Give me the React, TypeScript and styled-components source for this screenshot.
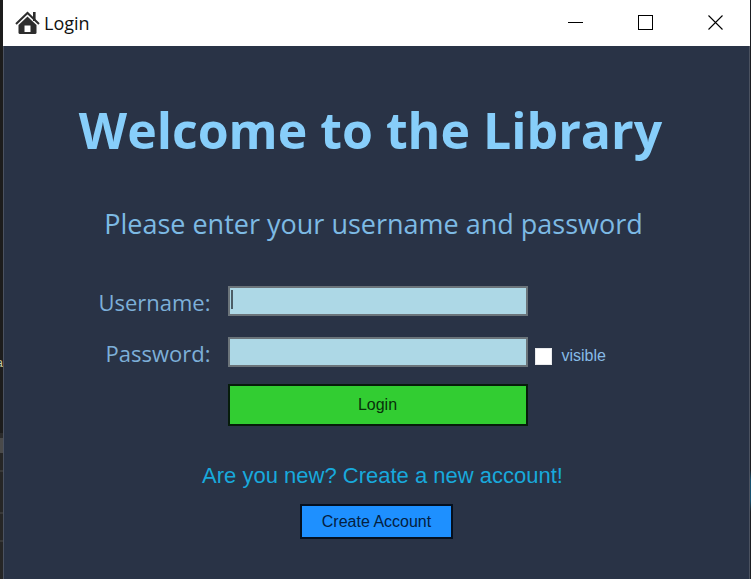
import React, { useState } from "react";
import styled, { createGlobalStyle } from "styled-components";

const UI = '"Open Sans", "Noto Sans", sans-serif';
const CLASSIC = '"Liberation Sans", Arial, sans-serif';

const GlobalStyle = createGlobalStyle`
  *, *::before, *::after { box-sizing: border-box; }
  body { margin: 0; background: #1d1f20; }
`;

const Desktop = styled.div`
  display: grid;
  grid-template-columns: 3px minmax(0, 1fr) 1px;
  min-height: 100vh;
`;

const LeftEdge = styled.div`
  overflow: hidden;
  padding-top: 355px;
  background: linear-gradient(
    #1c1c1c 433px, #2b2b2b 433px, #2b2b2b 438px, #4a4a4a 438px, #4a4a4a 453px,
    #262626 453px, #262626 470px, #383838 470px, #383838 472px,
    #262626 472px, #262626 512px, #383838 512px, #383838 514px,
    #262626 514px, #262626 540px, #383838 540px, #383838 542px, #262626 542px
  );
  color: #c9c9a0;
  font: 12px/16px ${CLASSIC};
  direction: rtl;
`;

const RightEdge = styled.div`
  background: linear-gradient(#1b1e22 470px, #17516f 480px, #17516f 500px, #1b1e22 512px);
`;

const Window = styled.main`
  display: flex;
  flex-direction: column;
  border: 1px solid #4b5260;
  border-top: 0;
  background: #293346;
`;

const TitleBar = styled.header`
  display: flex;
  align-items: center;
  height: 46px;
  margin: 0 -1px;
  padding-left: 12px;
  background: #fff;
  color: #111;
`;

const WindowTitle = styled.span`
  flex: 1;
  padding-left: 4px;
  font: 18px/24px ${UI};
`;

const CaptionButton = styled.button`
  display: grid;
  place-items: center;
  width: 70px;
  height: 46px;
  padding: 0 0 2px;
  border: 0;
  background: transparent;
  color: #000;
`;

const Content = styled.div`
  display: flex;
  flex: 1;
  flex-direction: column;
  align-items: center;
  padding: 48px 0 40px;
`;

const Heading = styled.h1`
  margin: 0;
  padding-right: 12px;
  color: #87cefa;
  font: 700 50px/72px ${UI};
  white-space: nowrap;
`;

const Prompt = styled.p`
  margin: 38px 0 0;
  padding-right: 6px;
  color: #7dbae4;
  font: 27px/40px ${UI};
  white-space: nowrap;
`;

const Form = styled.form`
  display: grid;
  grid-template-columns: 1fr 300px 1fr;
  grid-template-rows: 51px 47px auto;
  width: 100%;
  margin-top: 42px;
  padding-left: 2px;
`;

const FieldLabel = styled.label`
  grid-column: 1;
  padding-right: 17px;
  color: #7dafd8;
  font: 22px/32px ${UI};
  text-align: right;
`;

const Field = styled.div`
  position: relative;
  grid-column: 2;
`;

const TextBox = styled.input`
  display: block;
  width: 100%;
  height: 30px;
  padding: 2px 4px;
  border: 2px solid #6b747a;
  border-radius: 0;
  outline: 0;
  background: #add8e6;
  color: #111;
  font: 18px/22px ${CLASSIC};
`;

const Caret = styled.span`
  position: absolute;
  top: 4px;
  left: 3px;
  width: 2px;
  height: 19px;
  background: #4c5d66;
`;

const Visibility = styled.label`
  display: flex;
  align-items: center;
  align-self: start;
  gap: 10px;
  padding: 10px 0 0 7px;
  color: #87bbe6;
  font: 16px/18px ${CLASSIC};
`;

const CheckBox = styled.input`
  appearance: none;
  width: 17px;
  height: 17px;
  margin: 0;
  border: 1px solid #e8eaec;
  background: #fff;
  &:checked { box-shadow: inset 0 0 0 4px #fff; background: #222; }
`;

const ActionButton = styled.button<{ $kind: "login" | "create" }>`
  height: ${(p) => (p.$kind === "login" ? 42 : 35)}px;
  margin-top: ${(p) => (p.$kind === "login" ? 0 : 14)}px;
  padding: 0 20px;
  border: 2px solid ${(p) => (p.$kind === "login" ? "#061c0b" : "#04101f")};
  border-radius: 0;
  background: ${(p) => (p.$kind === "login" ? "#32cd32" : "#1e90ff")};
  color: ${(p) => (p.$kind === "login" ? "#08300a" : "#04203f")};
  font: 16px/20px ${CLASSIC};
  ${(p) => p.$kind === "login" && "grid-column: 2;"}
`;

const NewUser = styled.p`
  margin: 36px 0 0;
  padding-left: 12px;
  color: #18a9dc;
  font: 22px/28px ${CLASSIC};
  white-space: nowrap;
`;

const HouseIcon = () => (
  <svg width="25" height="24" viewBox="0 0 25 24" aria-hidden="true">
    <path d="M18 1h2.6v9H18z" fill="#2d2d2d" />
    <path d="M1 13 12.5 2 24 13" fill="none" stroke="#2d2d2d" strokeWidth="2" />
    <path d="M12.5 5.6 3.5 14v7.5q0 1.5 1.5 1.5h15q1.5 0 1.5-1.5V14z" fill="#2d2d2d" />
    <path d="M9.5 14.5h6V21h-6z" fill="#fff" />
  </svg>
);

export default function App() {
  const [visible, setVisible] = useState(false);
  const [username, setUsername] = useState("");
  return (
    <>
      <GlobalStyle />
      <Desktop>
        <LeftEdge aria-hidden="true">a</LeftEdge>
        <Window>
          <TitleBar>
            <HouseIcon />
            <WindowTitle>Login</WindowTitle>
            <CaptionButton type="button" aria-label="Minimize">
              <svg width="15" height="15" shapeRendering="crispEdges">
                <path d="M0 7.5h15" stroke="currentColor" />
              </svg>
            </CaptionButton>
            <CaptionButton type="button" aria-label="Maximize">
              <svg width="15" height="15" shapeRendering="crispEdges">
                <path d="M.5.5h14v14H.5z" fill="none" stroke="currentColor" />
              </svg>
            </CaptionButton>
            <CaptionButton type="button" aria-label="Close">
              <svg width="15" height="15">
                <path d="m.5.5 14 14m0-14-14 14" stroke="currentColor" strokeWidth="1.1" />
              </svg>
            </CaptionButton>
          </TitleBar>
          <Content>
            <Heading>Welcome to the Library</Heading>
            <Prompt>Please enter your username and password</Prompt>
            <Form onSubmit={(e) => e.preventDefault()}>
              <FieldLabel htmlFor="username">Username:</FieldLabel>
              <Field>
                <TextBox
                  id="username"
                  value={username}
                  onChange={(e) => setUsername(e.target.value)}
                />
                {username === "" && <Caret />}
              </Field>
              <FieldLabel htmlFor="password">Password:</FieldLabel>
              <Field>
                <TextBox id="password" type={visible ? "text" : "password"} />
              </Field>
              <Visibility>
                <CheckBox
                  type="checkbox"
                  checked={visible}
                  onChange={(e) => setVisible(e.target.checked)}
                />
                visible
              </Visibility>
              <ActionButton $kind="login" type="submit">Login</ActionButton>
            </Form>
            <NewUser>Are you new? Create a new account!</NewUser>
            <ActionButton $kind="create" type="button">Create Account</ActionButton>
          </Content>
        </Window>
        <RightEdge />
      </Desktop>
    </>
  );
}
